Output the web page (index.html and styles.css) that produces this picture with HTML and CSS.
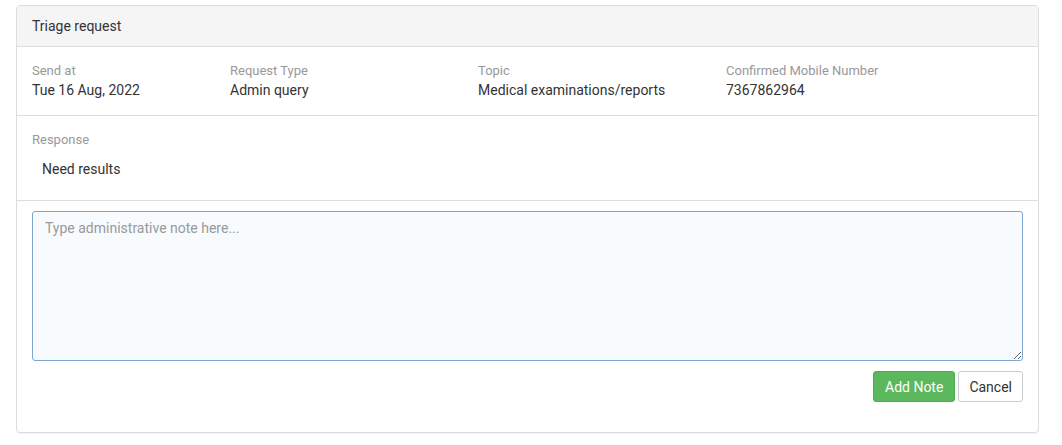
FILE: index.html
```html
<!DOCTYPE html>
<html lang="en">
<head>
    <meta charset="UTF-8">
    <meta name="viewport" content="width=device-width, initial-scale=1.0">
    <title>Triage request</title>
    <link rel="stylesheet" href="styles.css">
</head>
<body>
    <div class="panel">
        <div class="panel-heading">Triage request</div>

        <div class="info-row">
            <div class="info">
                <div class="label">Send at</div>
                <div class="value">Tue 16 Aug, 2022</div>
            </div>
            <div class="info">
                <div class="label">Request Type</div>
                <div class="value">Admin query</div>
            </div>
            <div class="info">
                <div class="label">Topic</div>
                <div class="value">Medical examinations/reports</div>
            </div>
            <div class="info">
                <div class="label">Confirmed Mobile Number</div>
                <div class="value">7367862964</div>
            </div>
        </div>

        <div class="response">
            <div class="label">Response</div>
            <p class="response-text">Need results</p>
        </div>

        <form class="note-form">
            <textarea placeholder="Type administrative note here..."></textarea>
            <div class="actions">
                <button type="button" class="btn btn-success">Add Note</button>
                <button type="button" class="btn btn-default">Cancel</button>
            </div>
        </form>
    </div>
</body>
</html>
```

FILE: styles.css
```css
body{
    margin: 0;
    padding: 5px 23px 12px 16px;
    background-color: white;
    font-family: Roboto, "Liberation Sans", sans-serif;
    font-size: 14px;
    color: #333;
}
.panel{
    border: solid 1px #ddd;
    border-radius: 4px;
    box-shadow: 0 1px 1px rgba(0,0,0,0.05);
    height: 428px;
    box-sizing: border-box;
}
.panel-heading{
    background-color: #f5f5f5;
    border-bottom: solid 1px #ddd;
    border-radius: 3px 3px 0 0;
    padding: 10px 15px;
    line-height: 20px;
    color: #333;
}
.info-row{
    display: grid;
    grid-template-columns: 198px 248px 248px 1fr;
    padding: 15px 15px 15px 15px;
    border-bottom: solid 1px #ddd;
}
.label{
    font-size: 13px;
    color: #999;
    line-height: 18px;
}
.value{
    line-height: 20px;
}
.response{
    padding: 15px 15px 21px 15px;
    border-bottom: solid 1px #ddd;
}
.response-text{
    margin: 10px 0 0 10px;
    line-height: 20px;
}
.note-form{
    padding: 10px 15px;
}
textarea{
    display: block;
    width: 100%;
    height: 150px;
    box-sizing: border-box;
    border: solid 1px #7fa6d2;
    border-radius: 3px;
    background-color: #f7fbfe;
    padding: 6px 12px;
    font-family: Roboto, "Liberation Sans", sans-serif;
    font-size: 14px;
    line-height: 20px;
    color: #333;
    resize: vertical;
}
textarea::placeholder{
    color: #999;
}
.actions{
    display: flex;
    justify-content: flex-end;
    gap: 3px;
    margin-top: 10px;
}
.btn{
    height: 31px;
    padding: 0 11px;
    font-family: Roboto, "Liberation Sans", sans-serif;
    font-size: 14px;
    border-radius: 3px;
    border: solid 1px #ccc;
    cursor: pointer;
}
.btn-success{
    background-color: #5cb85c;
    border-color: #4cae4c;
    color: white;
}
.btn-default{
    padding: 0 10px;
    background-color: white;
    color: #333;
}
```
